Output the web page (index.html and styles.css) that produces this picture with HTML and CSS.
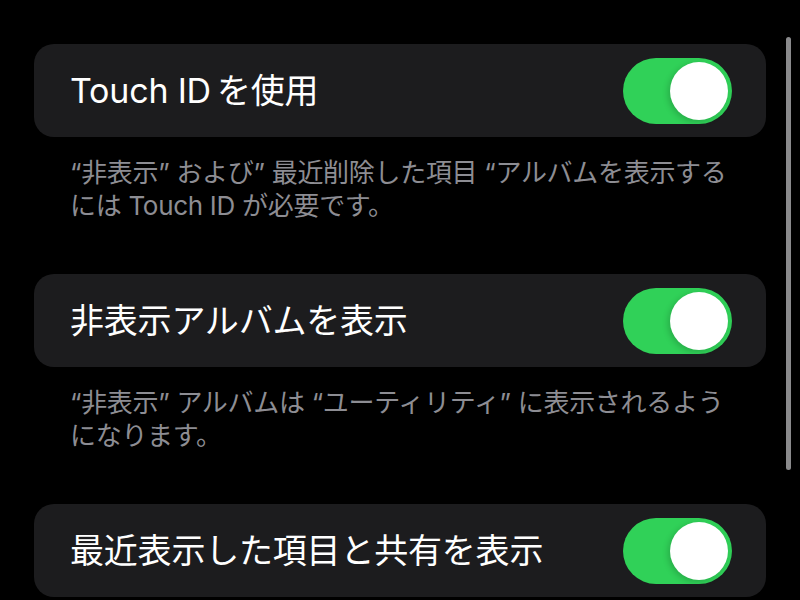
FILE: index.html
```html
<!DOCTYPE html>
<html lang="ja">
<head>
<meta charset="utf-8">
<link rel="stylesheet" href="styles.css">
</head>
<body>
<div class="page">
  <div class="card">
    <span class="label">Touch ID&#8201;を使用</span>
    <span class="switch"><span class="knob"></span></span>
  </div>
  <p class="caption">“非表示” および” 最近削除した項目 “アルバムを表示するには Touch ID が必要です。</p>
  <div class="card">
    <span class="label">非表示アルバムを表示</span>
    <span class="switch"><span class="knob"></span></span>
  </div>
  <p class="caption">“非表示” アルバムは “ユーティリティ” に表示されるようになります。</p>
  <div class="card">
    <span class="label">最近表示した項目と共有を表示</span>
    <span class="switch"><span class="knob"></span></span>
  </div>
</div>
<div class="scrollbar"></div>
</body>
</html>
```

FILE: styles.css
```css
html, body {
  margin: 0;
  padding: 0;
  background: #000;
  height: 100%;
  overflow: hidden;
}
body {
  font-family: Inter, "Noto Sans CJK JP", sans-serif;
  color: #fff;
}
.page {
  padding: 44px 34px 0 34px;
  display: flex;
  flex-direction: column;
}
.card {
  background: #1c1c1e;
  border-radius: 20px;
  height: 93px;
  box-sizing: border-box;
  padding: 0 34px 0 36px;
  display: flex;
  align-items: center;
  justify-content: space-between;
  flex-shrink: 0;
}
.label {
  font-size: 34px;
  line-height: 40px;
  letter-spacing: -0.2px;
}
.switch {
  width: 109px;
  height: 66px;
  border-radius: 33px;
  background: #30d158;
  box-sizing: border-box;
  padding: 4px;
  display: flex;
  justify-content: flex-end;
}
.knob {
  width: 58px;
  height: 58px;
  border-radius: 50%;
  background: #fff;
  box-shadow: -2px 2px 6px rgba(0, 0, 0, 0.18);
}
.caption {
  margin: 0;
  padding: 19px 34px 52px 36px;
  font-size: 26px;
  line-height: 33px;
  letter-spacing: -0.3px;
  color: #8d8d93;
}
.scrollbar {
  position: absolute;
  left: 786px;
  top: 37px;
  width: 5px;
  height: 433px;
  border-radius: 3px;
  background: #8a8a8c;
}
```
